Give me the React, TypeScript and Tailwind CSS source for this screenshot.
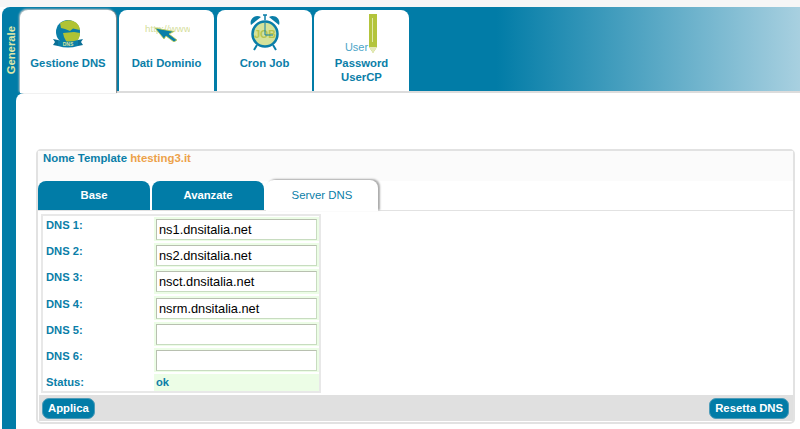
import type { ReactNode } from 'react';

const rows = [
  { label: 'DNS 1:', value: 'ns1.dnsitalia.net' },
  { label: 'DNS 2:', value: 'ns2.dnsitalia.net' },
  { label: 'DNS 3:', value: 'nsct.dnsitalia.net' },
  { label: 'DNS 4:', value: 'nsrm.dnsitalia.net' },
  { label: 'DNS 5:', value: '' },
  { label: 'DNS 6:', value: '' },
];

function GlobeIcon() {
  return (
    <svg width="32" height="29" viewBox="0 0 32 29">
      <circle cx="16" cy="12" r="12" fill="#0a7ea8" />
      <path d="M8 3Q16-2 24 2.5 28 6 27.8 10L21 8.5 18 11 13 9 9 8z" fill="#b0c334" />
      <path d="M11 13l11-1 6 1q0 6-5 10h-8l-3-6z" fill="#b0c334" />
      <path d="M1 19l5 1v6l-5-1 2-3zM31 19l-5 1v6l5-1-2-3z" fill="#0a6f96" />
      <path d="M6 20q10 3 20 0v6q-10 3-20 0z" fill="#0a7ea8" />
      <text x="16" y="26" fontSize="5" fontWeight="700" textAnchor="middle" fill="#d8e6a0" fontFamily="'Liberation Sans', sans-serif">DNS</text>
    </svg>
  );
}

function LinkIcon() {
  return (
    <svg width="46" height="20" viewBox="0 0 46 20">
      <text x="1" y="10" fontSize="9.8" fontWeight="400" fill="#d5de9b" fontFamily="'Liberation Sans', sans-serif">http://www</text>
      <path d="M11 6l19 3.5-5 2.5 8 6-3 2-8-6-2 3z" fill="#0a7ea8" stroke="#c3d04e" strokeWidth="0.8" strokeLinejoin="round" />
    </svg>
  );
}

function ClockIcon() {
  return (
    <svg width="30" height="37" viewBox="0 0 30 37">
      <path d="M1 11C-1 5 5 0 11 3zM29 11C31 5 25 0 19 3z" fill="#0a7ea8" />
      <path d="M13 1h4M15 1v5" stroke="#0a7ea8" strokeWidth="1.5" />
      <path d="M7 31l-3 5M23 31l3 5" stroke="#0a7ea8" strokeWidth="2" />
      <circle cx="15" cy="20" r="12.5" fill="#d5e29a" stroke="#0a7ea8" strokeWidth="2.5" />
      <text x="15" y="24" fontSize="10.5" fontWeight="700" textAnchor="middle" fill="#b5c44e" fontFamily="'Liberation Sans', sans-serif">JOB</text>
      <path d="M15 9v12h8" fill="none" stroke="#0a7ea8" strokeWidth="1" />
    </svg>
  );
}

function PencilIcon() {
  return (
    <div className="flex items-end h-[42px]">
      <span className="text-[11px] leading-[12px] mb-[1px] font-normal text-[#4ba5c8]">User</span>
      <svg width="9" height="40" viewBox="0 0 9 40" className="ml-[1px]">
        <path d="M0 0h8v33l-4 6-4-6z" fill="#b3c43c" />
        <path d="M3.5 4v24" stroke="#dfe8a8" strokeWidth="1" />
        <path d="M0 33h8l-4 6z" fill="#e3e9b8" />
      </svg>
    </div>
  );
}

function TopTab({ icon, label, active, width, iconPadding }: { icon: ReactNode; label: ReactNode; active?: boolean; width: string; iconPadding: string }) {
  return (
    <div
      className={`${width} bg-white rounded-t-[8px] flex flex-col items-center text-center text-[11.3px] leading-[14px] font-bold text-[#0a7ea8] ${
        active ? 'relative h-[83px] -mb-[2px] shadow-[1px_0_1px_#888,-1px_-1px_2px_#ccc]' : 'h-[81px]'
      }`}
    >
      <div className={`h-[46px] flex-none flex items-end justify-center ${iconPadding}`}>{icon}</div>
      {label}
    </div>
  );
}

function SubTab({ label, active }: { label: string; active?: boolean }) {
  if (active) {
    return (
      <div className="w-[112px] h-[31px] -mt-px -mb-px bg-white rounded-t-[8px] shadow-[2px_-1px_2px_#aaa] flex items-center justify-center text-[11.4px] text-[#0a7ea8]">
        {label}
      </div>
    );
  }
  return (
    <div className="w-[112px] h-[29px] bg-[#017ca7] rounded-t-[8px] flex items-center justify-center text-[11.3px] font-bold text-white">
      {label}
    </div>
  );
}

function ActionButton({ label }: { label: string }) {
  return (
    <button className="h-[21px] px-[5px] rounded-[7px] bg-[#017ca7] border border-[#4d9cb9] text-[11.3px] font-bold text-white">
      {label}
    </button>
  );
}

export default function App() {
  return (
    <div className="w-[800px] h-[429px] overflow-hidden bg-white font-['Liberation_Sans',Arial,sans-serif]">
      <div className="h-[7px] bg-[#f6f6f6]" />
      <div className="ml-[2px] h-[422px] rounded-tl-[8px] bg-[linear-gradient(to_right,#017ca7_0%,#017ca7_62%,#a8d0e0_100%)] flex flex-col">
        <div className="flex h-[86px] flex-none">
          <div className="w-[18px] flex-none flex items-start justify-center pt-[19px]">
            <span className="[writing-mode:vertical-rl] rotate-180 text-[11.3px] font-bold text-[#dfe8a8] leading-[14px]">Generale</span>
          </div>
          <div className="flex-1 flex gap-[3px] pt-[3px] border-b-[2px] border-[#dcdcdc]">
            <TopTab width="w-[96px]" iconPadding="pb-[7px]" active icon={<GlobeIcon />} label="Gestione DNS" />
            <TopTab width="w-[95px]" iconPadding="pb-[14px]" icon={<LinkIcon />} label="Dati Dominio" />
            <TopTab width="w-[95px]" iconPadding="pb-[5px]" icon={<ClockIcon />} label="Cron Job" />
            <TopTab width="w-[95px] -ml-px" iconPadding="pb-[2px]" icon={<PencilIcon />} label={<span>Password<br />UserCP</span>} />
          </div>
        </div>
        <div className="flex-1 ml-[14px] bg-[#017ca7]">
          <div className="h-full bg-white rounded-tl-[8px] pt-[56px] pl-[20px] pr-[5px]">
            <div className="h-[275px] border-[2px] border-[#e2e2e2] rounded-[5px] flex flex-col">
              <div className="h-[30px] px-[5px] bg-[#fbfbfb] text-[11.4px] leading-[14px] font-bold text-[#0a7ea8]">
                Nome Template <span className="text-[#eda24a]">htesting3.it</span>
              </div>
              <div className="flex gap-[2px] border-b border-[#e2e2e2]">
                <SubTab label="Base" />
                <SubTab label="Avanzate" />
                <SubTab label="Server DNS" active />
              </div>
              <div className="flex-1 pl-[3px] pt-[3px]">
                <div className="w-[280px] h-[179px] border-[2px] border-[#e8e8e8] pt-px flex flex-col gap-[2px]">
                  {rows.map((row) => (
                    <div key={row.label} className="flex h-[24.2px]">
                      <div className="w-[111px] pl-[3px] pt-px text-[11.2px] leading-[14px] font-bold text-[#0a7ea8]">{row.label}</div>
                      <div className="w-[165px] bg-[#ecfde6] px-[2px] py-[2px]">
                        <input
                          readOnly
                          value={row.value}
                          className="block w-[161px] h-[21px] px-[2px] bg-white border border-[#c8dcc0] border-t-[#b8c0b0] border-l-[#b8c0b0] text-[12.8px] text-black outline-none"
                        />
                      </div>
                    </div>
                  ))}
                  <div className="flex h-[17px]">
                    <div className="w-[111px] pl-[3px] text-[11.2px] font-bold text-[#0a7ea8] leading-[17px]">Status:</div>
                    <div className="w-[165px] bg-[#ecfde6] px-[2px] text-[11.2px] font-bold text-[#0a7ea8] leading-[17px]">ok</div>
                  </div>
                </div>
              </div>
              <div className="ml-[1px] mb-[1px] h-[26px] bg-[#e0e0e0] flex items-center justify-between pl-[3px] pr-[4px]">
                <ActionButton label="Applica" />
                <ActionButton label="Resetta DNS" />
              </div>
            </div>
          </div>
        </div>
      </div>
    </div>
  );
}
